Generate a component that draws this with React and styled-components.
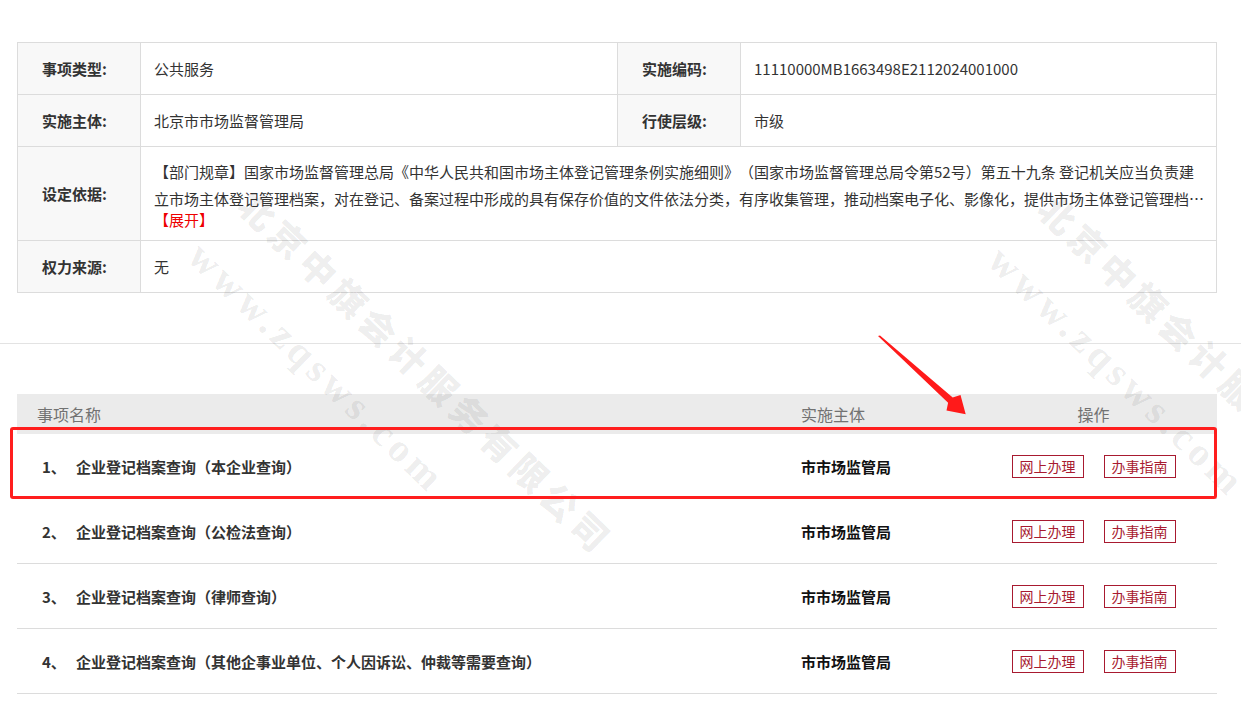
import React from "react";
import styled, { createGlobalStyle } from "styled-components";

const GlobalStyle = createGlobalStyle`
  html, body { margin: 0; padding: 0; background: #fff; }
  body {
    font-family: "Noto Sans CJK SC", "Microsoft YaHei", sans-serif;
    color: #333;
    text-spacing-trim: space-all;
  }
  * { box-sizing: border-box; }
`;

const Page = styled.div`
  position: relative;
  width: 1241px;
  height: 705px;
  overflow: hidden;
  background: #fff;
  padding-top: 42px;
`;

const Section = styled.div`
  width: 1200px;
  margin-left: 17px;
`;

const InfoGrid = styled.div`
  display: grid;
  grid-template-columns: 123px 477px 123px 476px;
  border-top: 1px solid #dcdcdc;
  border-left: 1px solid #dcdcdc;
`;

const Cell = styled.div`
  min-height: ${(p) => (p.$tall ? "94px" : "52px")};
  border-right: 1px solid #dcdcdc;
  border-bottom: 1px solid #dcdcdc;
  display: flex;
  align-items: center;
  font-size: 15px;
  line-height: 20px;
`;

const Label = styled(Cell)`
  background: #f8f8f8;
  padding-left: 24px;
  font-weight: 700;
  color: #333;
`;

const Value = styled(Cell)`
  grid-column: ${(p) => (p.$span ? "span 3" : "auto")};
  padding: 0 13px;
  color: #333;
`;

const Basis = styled(Value)`
  display: block;
  padding: 11px 10px 12px 13px;
`;

const Clamp = styled.div`
  display: -webkit-box;
  -webkit-box-orient: vertical;
  -webkit-line-clamp: 2;
  overflow: hidden;
  line-height: 27px;
`;

const Expand = styled.span`
  display: block;
  color: #e00;
  line-height: 16px;
  cursor: pointer;
`;

const Rule = styled.div`
  height: 1px;
  background: #e3e3e3;
  margin: 50px 0;
`;

const ListGrid = styled.div`
  display: grid;
  grid-template-columns: 764px 189px 247px;
  align-items: center;
`;

const ListHead = styled(ListGrid)`
  height: 40px;
  background: #ebebeb;
  color: #727272;
  font-size: 16px;
`;

const HeadCell = styled.div`
  padding-left: ${(p) => (p.$center ? "0" : "20px")};
  text-align: ${(p) => (p.$center ? "center" : "left")};
`;

const ListRow = styled(ListGrid)`
  height: 65px;
  border-bottom: 1px solid #dcdcdc;
  font-size: 15px;
  font-weight: 700;
`;

const NameCell = styled.div`
  display: flex;
  padding-left: 25px;
  color: #333;
`;

const Num = styled.span`
  width: 34px;
`;

const Agency = styled.div`
  padding-left: 20px;
  color: #111;
`;

const Ops = styled.div`
  display: flex;
  justify-content: center;
  gap: 20px;
`;

const OpButton = styled.a`
  display: inline-block;
  height: 23px;
  padding: 0 7px;
  border: 1px solid #a81a30;
  color: #a81a30;
  font-size: 14px;
  font-weight: 400;
  line-height: 21px;
  text-decoration: none;
  cursor: pointer;
`;

const Highlight = styled.div`
  position: absolute;
  left: 10px;
  top: 427px;
  width: 1207px;
  height: 72px;
  border: 3px solid #ff1e1e;
  border-radius: 3px;
  pointer-events: none;
`;

const ArrowSvg = styled.svg`
  position: absolute;
  left: 870px;
  top: 325px;
  pointer-events: none;
`;

const Mark = styled.div`
  position: absolute;
  left: ${(p) => p.$x}px;
  top: ${(p) => p.$y}px;
  transform-origin: 0 0;
  transform: rotate(44deg);
  white-space: nowrap;
  pointer-events: none;
  color: rgba(0, 0, 0, 0.085);
`;

const MarkName = styled.div`
  font-family: "Noto Sans CJK SC", sans-serif;
  font-weight: 900;
  font-size: 36px;
  line-height: 40px;
  letter-spacing: 6px;
`;

const MarkUrl = styled.div`
  margin-top: 34px;
  font-family: "Liberation Serif", serif;
  font-weight: 700;
  font-size: 40px;
  line-height: 40px;
  letter-spacing: 5px;
`;

const rows = [
  "企业登记档案查询（本企业查询）",
  "企业登记档案查询（公检法查询）",
  "企业登记档案查询（律师查询）",
  "企业登记档案查询（其他企事业单位、个人因诉讼、仲裁等需要查询）",
];

export default function App() {
  return (
    <>
      <GlobalStyle />
      <Page>
        <Section>
          <InfoGrid>
            <Label>事项类型:</Label>
            <Value>公共服务</Value>
            <Label>实施编码:</Label>
            <Value>11110000MB1663498E2112024001000</Value>
            <Label>实施主体:</Label>
            <Value>北京市市场监督管理局</Value>
            <Label>行使层级:</Label>
            <Value>市级</Value>
            <Label $tall>设定依据:</Label>
            <Basis $span $tall>
              <Clamp>
                【部门规章】国家市场监督管理总局《中华人民共和国市场主体登记管理条例实施细则》（国家市场监督管理总局令第52号）第五十九条 登记机关应当负责建
                <br />
                立市场主体登记管理档案，对在登记、备案过程中形成的具有保存价值的文件依法分类，有序收集管理，推动档案电子化、影像化，提供市场主体登记管理档案查询服务。
              </Clamp>
              <Expand>【展开】</Expand>
            </Basis>
            <Label>权力来源:</Label>
            <Value $span>无</Value>
          </InfoGrid>
        </Section>
        <Rule />
        <Section>
          <ListHead>
            <HeadCell>事项名称</HeadCell>
            <HeadCell>实施主体</HeadCell>
            <HeadCell $center>操作</HeadCell>
          </ListHead>
          {rows.map((name, i) => (
            <ListRow key={i}>
              <NameCell>
                <Num>{i + 1}、</Num>
                <span>{name}</span>
              </NameCell>
              <Agency>市市场监管局</Agency>
              <Ops>
                <OpButton>网上办理</OpButton>
                <OpButton>办事指南</OpButton>
              </Ops>
            </ListRow>
          ))}
        </Section>

        <Mark $x={260} $y={182}>
          <MarkName>北京中旗会计服务有限公司</MarkName>
          <MarkUrl>www.zqsws.com</MarkUrl>
        </Mark>
        <Mark $x={1060} $y={186}>
          <MarkName>北京中旗会计服务有限公司</MarkName>
          <MarkUrl>www.zqsws.com</MarkUrl>
        </Mark>

        <Highlight />
        <ArrowSvg width="110" height="100" viewBox="0 0 110 100">
          <polygon
            points="8,11 10,10.5 82.7,72.5 90.5,70 95.7,89.3 76.5,85.5 78.1,77.7"
            fill="#ff1a1a"
          />
        </ArrowSvg>
      </Page>
    </>
  );
}
